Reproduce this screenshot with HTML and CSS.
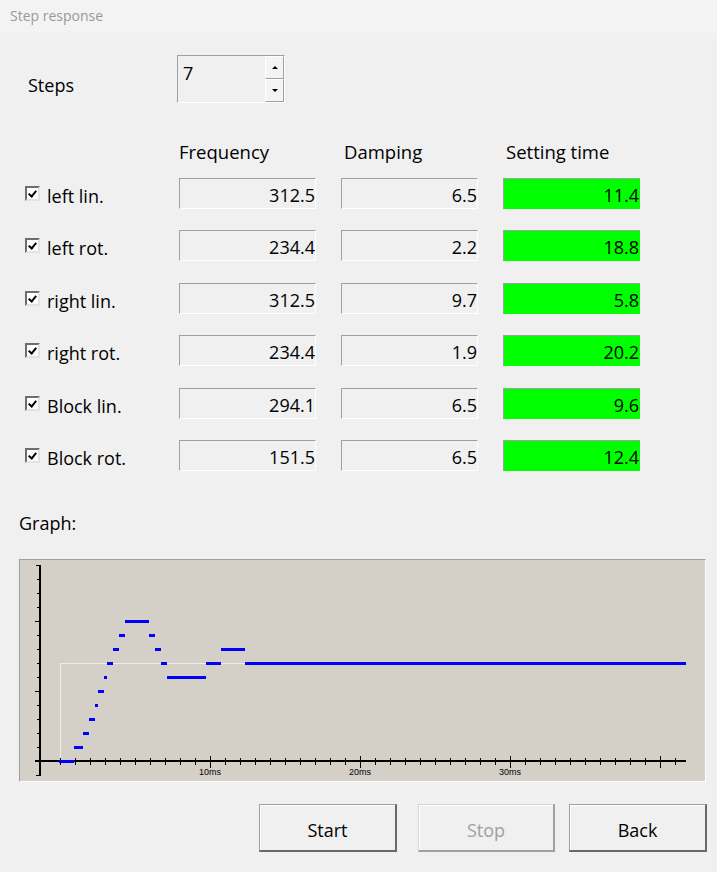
FILE: index.html
```html
<!DOCTYPE html>
<html lang="en">
  <head>
    <meta charset="UTF-8" />
    <title>Step response</title>
    <link rel="stylesheet" href="styles.css">
  </head>
  <body>
    <script>
      onload = function () {
        const NS = "http://www.w3.org/2000/svg";
        const svg = document.querySelector(".graph svg");

        // helper functions
        function add(tag, attrs, text) {
          const el = document.createElementNS(NS, tag);
          for (const key in attrs) {
            el.setAttribute(key, attrs[key]);
          }
          if (text) el.textContent = text;
          svg.appendChild(el);
          return el;
        }

        function tick(x1, y1, x2, y2, w) {
          add("line", { x1, y1, x2, y2, class: "axis", "stroke-width": w || 1 });
        }

        // reference step
        add("polyline", { points: "60,761 60,663 686,663", class: "ref" });

        // y axis
        tick(40, 565, 40, 776, 2);
        tick(36, 565, 40, 565);
        tick(36, 775, 40, 775);
        for (let k = 1; k <= 14; k++) {
          const y = 565 + k * 14;
          const major = (14 - k) % 5 == 0;
          tick(major ? 35 : 37, y, 40, y);
        }

        // x axis
        tick(35, 761, 686, 761, 2);
        for (let k = 0; k <= 41; k++) {
          const x = 60 + k * 15;
          const major = k > 0 && k % 10 == 0;
          if (major) tick(x, 756, x, 768);
          else tick(x, 758, x, 765);
        }
        [["10ms", 210], ["20ms", 360], ["30ms", 510]].forEach(([label, x]) => {
          add("text", { x, y: 775, class: "tick-label" }, label);
        });

        // measured response
        const segments = [
          [761, 59, 74], [747, 74, 83], [733, 83, 89], [719, 89, 95],
          [705, 95, 98], [691, 98, 104], [677, 104, 107], [663, 107, 113],
          [649, 113, 119], [635, 119, 125], [621, 125, 149], [635, 149, 155],
          [649, 155, 161], [663, 161, 167], [677, 167, 206], [663, 206, 221],
          [649, 221, 245], [663, 245, 686],
        ];
        segments.forEach(([y, x1, x2]) => {
          add("rect", { x: x1, y: y - 1, width: x2 - x1, height: 3, class: "trace" });
        });
      };
    </script>

    <div class="titlebar">Step response</div>

    <div class="content">
      <div class="steps-row">
        <span class="steps-label">Steps</span>
        <div class="spin">
          <span class="spin-value">7</span>
          <div class="spin-buttons">
            <span class="spin-btn up"></span>
            <span class="spin-btn down"></span>
          </div>
        </div>
      </div>

      <div class="heads">
        <span></span>
        <span class="col-head first">Frequency</span>
        <span class="col-head">Damping</span>
        <span class="col-head">Setting time</span>
      </div>

      <div class="rows">
        <label class="row-label"><span class="check"></span><span>left lin.</span></label>
        <div class="field">312.5</div>
        <div class="field">6.5</div>
        <div class="field ok">11.4</div>

        <label class="row-label"><span class="check"></span><span>left rot.</span></label>
        <div class="field">234.4</div>
        <div class="field">2.2</div>
        <div class="field ok">18.8</div>

        <label class="row-label"><span class="check"></span><span>right lin.</span></label>
        <div class="field">312.5</div>
        <div class="field">9.7</div>
        <div class="field ok">5.8</div>

        <label class="row-label"><span class="check"></span><span>right rot.</span></label>
        <div class="field">234.4</div>
        <div class="field">1.9</div>
        <div class="field ok">20.2</div>

        <label class="row-label"><span class="check"></span><span>Block lin.</span></label>
        <div class="field">294.1</div>
        <div class="field">6.5</div>
        <div class="field ok">9.6</div>

        <label class="row-label"><span class="check"></span><span>Block rot.</span></label>
        <div class="field">151.5</div>
        <div class="field">6.5</div>
        <div class="field ok">12.4</div>
      </div>

      <div class="graph-label">Graph:</div>
      <div class="graph">
        <svg width="685" height="221" viewBox="20 560 685 221"></svg>
      </div>

      <div class="buttons">
        <button class="btn start">Start</button>
        <button class="btn stop" disabled>Stop</button>
        <button class="btn">Back</button>
      </div>
    </div>
  </body>
</html>
```

FILE: styles.css
```css
/* body styles */
body {
  margin: 0;
  padding: 0;
  width: 717px;
  height: 872px;
  overflow: hidden;
  background-color: #f0f0f0;
  font-family: "Open Sans", "Noto Sans", sans-serif;
  font-size: 18px;
  color: #000;
}

/* title bar */
.titlebar {
  height: 33px;
  padding-left: 10px;
  background-color: #f3f3f3;
  color: #999;
  font-size: 14px;
  line-height: 32px;
}

.content {
  padding-top: 22px;
}

/* steps spinner */
.steps-row {
  display: flex;
  align-items: center;
  height: 48px;
}

.steps-label {
  width: 149px;
  margin-left: 28px;
  padding-top: 12px;
  line-height: 24px;
}

.spin {
  display: flex;
  width: 108px;
  height: 48px;
  box-sizing: border-box;
  border: 1px solid;
  border-color: #a0a0a0 #fff #fff #a0a0a0;
}

.spin-value {
  flex: 1;
  padding: 5px 0 0 5px;
  line-height: 24px;
}

.spin-buttons {
  display: flex;
  flex-direction: column;
  width: 19px;
}

.spin-btn {
  flex: 1;
  position: relative;
  border: 1px solid;
  border-color: #fff #a0a0a0 #a0a0a0 #fff;
  background-color: #f4f4f4;
}

.spin-btn::after {
  content: "";
  position: absolute;
  left: 50%;
  top: 50%;
  margin: -2px 0 0 -3px;
  border-left: 3px solid transparent;
  border-right: 3px solid transparent;
}

.spin-btn.up::after {
  border-bottom: 3px solid #000;
}

.spin-btn.down::after {
  border-top: 3px solid #000;
}

/* parameter table */
.heads,
.rows {
  display: grid;
  grid-template-columns: 129px 137px 137px 137px;
  column-gap: 25px;
  padding-left: 25px;
}

.heads {
  margin-top: 37px;
  line-height: 24px;
  font-size: 18.5px;
}

.col-head {
  padding-left: 3px;
}

.col-head.first {
  padding-left: 0;
}

.rows {
  margin-top: 14px;
  row-gap: 21.4px;
}

.row-label {
  display: flex;
  align-items: center;
  gap: 7px;
  height: 31px;
}

.row-label span:last-child {
  padding-top: 5px;
  line-height: 26px;
}

.check {
  position: relative;
  width: 11px;
  height: 11px;
  border: 2px solid;
  border-color: #6d6d6d #e3e3e3 #e3e3e3 #6d6d6d;
  background-color: #fff;
}

.check::after {
  content: "";
  position: absolute;
  left: 3px;
  top: 1px;
  width: 3px;
  height: 6px;
  border: solid #000;
  border-width: 0 2px 2px 0;
  transform: rotate(40deg);
}

.field {
  height: 31px;
  box-sizing: border-box;
  border: 1px solid;
  border-color: #a0a0a0 #fff #fff #a0a0a0;
  padding-top: 3px;
  text-align: right;
  line-height: 26px;
}

.field.ok {
  background-color: #00ff00;
  border-right-color: #00ff00;
  border-bottom-color: #00ff00;
}

/* graph */
.graph-label {
  margin-top: 40px;
  padding-left: 19px;
  line-height: 24px;
}

.graph {
  margin: 24px 0 0 19px;
  width: 687px;
  height: 223px;
  box-sizing: border-box;
  border: 1px solid;
  border-color: #a0a0a0 #fff #fff #a0a0a0;
  background-color: #d4d0c8;
}

.graph svg {
  display: block;
}

.axis {
  stroke: #000;
  shape-rendering: crispEdges;
}

.ref {
  fill: none;
  stroke: #ececec;
  stroke-width: 1;
  shape-rendering: crispEdges;
}

.trace {
  fill: #0000ff;
  shape-rendering: crispEdges;
}

.tick-label {
  font-family: "Liberation Sans", Arial, sans-serif;
  font-size: 9px;
  text-anchor: middle;
}

/* buttons */
.buttons {
  display: flex;
  justify-content: flex-end;
  margin-top: 22px;
  padding-right: 10px;
}

.btn {
  width: 138px;
  height: 48px;
  padding: 5px 0 0;
  border: 1px solid;
  border-color: #a0a0a0 #696969 #696969 #a0a0a0;
  border-width: 1px 2px 2px 1px;
  background-color: #f0f0f0;
  box-shadow: inset 1px 1px #fff;
  font-family: inherit;
  font-size: 18px;
  color: #000;
}

.btn.start {
  margin-right: 21px;
}

.btn.stop {
  width: 137px;
  margin-right: 14px;
  border-color: #d4d4d4 #a0a0a0 #a0a0a0 #d4d4d4;
  color: #a0a0a0;
}
```
